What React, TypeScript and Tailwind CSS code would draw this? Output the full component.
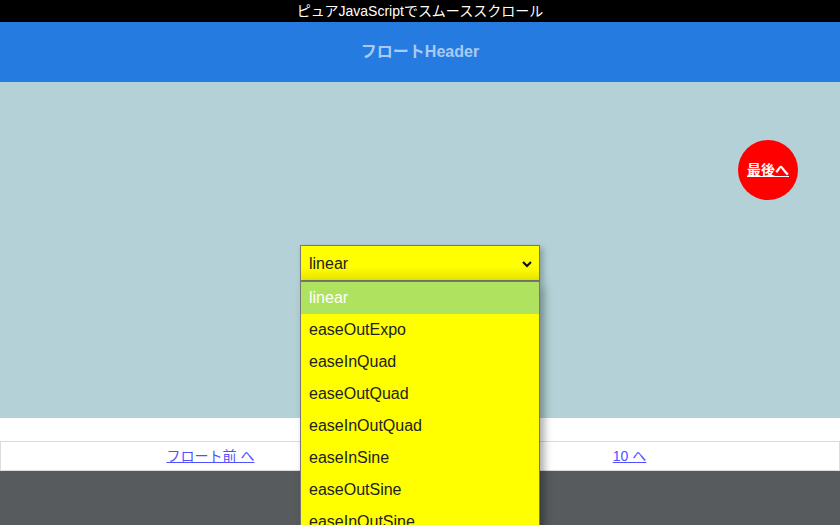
import React from "react";

const items = [
  "linear",
  "easeOutExpo",
  "easeInQuad",
  "easeOutQuad",
  "easeInOutQuad",
  "easeInSine",
  "easeOutSine",
  "easeInOutSine",
];

export default function App() {
  return (
    <div
      className="relative h-[525px] w-[840px] overflow-hidden bg-[#575b5e]"
      style={{ fontFamily: '"Liberation Sans", "Noto Sans CJK JP", sans-serif' }}
    >
      <div className="flex h-[22px] items-center justify-center bg-black text-[14px] leading-none text-white">
        ピュアJavaScriptでスムーススクロール
      </div>
      <div className="flex h-[60px] items-center justify-center bg-[#267be0] text-[16px] font-bold text-[#a9cbf3]">
        フロートHeader
      </div>
      <div className="flex h-[336px] justify-center bg-[#b3d1d6] pt-[163px]">
        <div className="relative h-[36px] w-[240px]">
          <div className="flex h-[36px] w-[240px] items-center justify-between border border-[#767676] bg-gradient-to-b from-[#ffff00] from-60% to-[#e8e800] pl-[8px] pr-[6px] pt-[2px] text-[16px] text-[#222] shadow-[3px_3px_6px_rgba(0,0,0,0.25)]">
            <span>linear</span>
            <svg width="12" height="12" viewBox="0 0 12 12">
              <path d="M2 4 L6 8 L10 4" fill="none" stroke="#111" strokeWidth="2.2" />
            </svg>
          </div>
          <div className="absolute left-0 top-[36px] z-10 w-[240px] border-l border-r border-t border-[#767676] bg-[#ffff00] shadow-[4px_4px_8px_rgba(0,0,0,0.35)]">
            {items.map((it, i) => (
              <div
                key={it}
                className={
                  i === 0
                    ? "flex h-[32px] items-center bg-[#aee25f] pl-[8px] text-[16px] text-white"
                    : "flex h-[32px] items-center pl-[8px] text-[16px] text-[#222]"
                }
              >
                {it}
              </div>
            ))}
          </div>
        </div>
      </div>
      <div className="h-[23px] bg-white" />
      <div className="grid h-[30px] grid-cols-2 border border-[#dcdcdc] bg-white text-[14px]">
        <div className="flex items-center justify-center">
          <a href="#" className="text-[#5050ff] underline">
            フロート前 へ
          </a>
        </div>
        <div className="flex items-center justify-center">
          <a href="#" className="text-[#5050ff] underline">
            10 へ
          </a>
        </div>
      </div>
      <div className="absolute left-[738px] top-[140px] flex h-[60px] w-[60px] items-center justify-center rounded-full bg-[#ff0000] text-[14px] font-bold text-white">
        <a href="#" className="underline">最後へ</a>
      </div>
    </div>
  );
}
